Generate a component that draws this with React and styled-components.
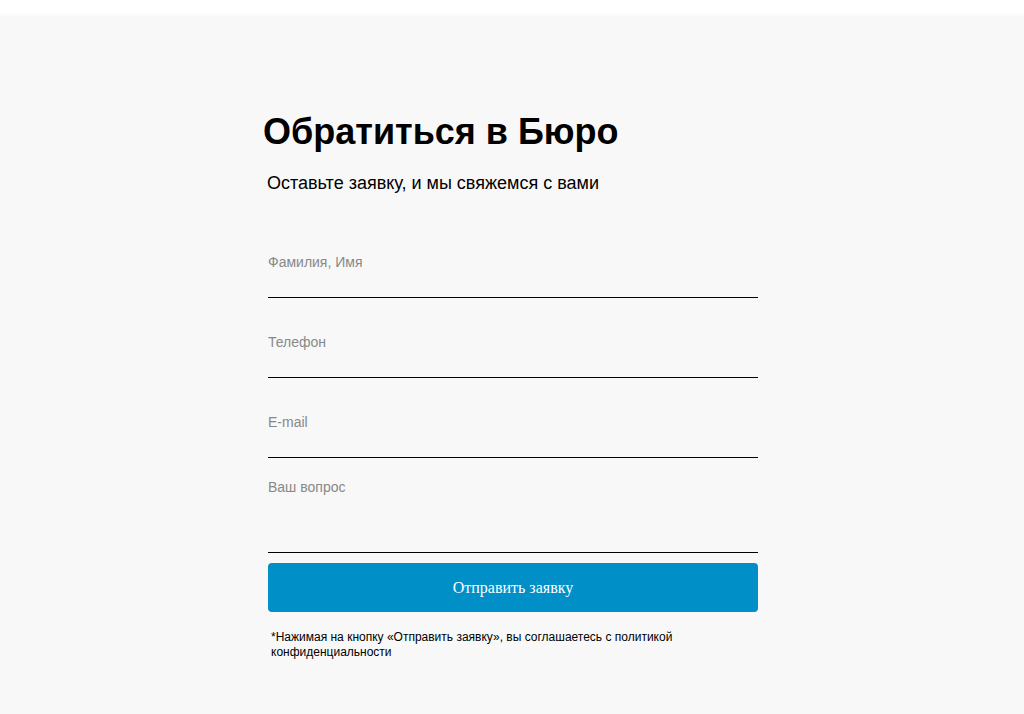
import React from 'react';
import styled, { createGlobalStyle } from 'styled-components';

const GlobalStyle = createGlobalStyle`
  html, body {
    margin: 0;
    padding: 0;
    background: #fff;
  }
  body {
    font-family: "Liberation Sans", Arial, sans-serif;
    color: #000;
  }
  * {
    box-sizing: border-box;
  }
`;

const Section = styled.section`
  min-height: 100vh;
  padding-top: 112px;
  background: linear-gradient(to bottom, #fff 0, #fff 12px, #f8f8f8 17px, #f8f8f8 100%);
`;

const Wrap = styled.div`
  width: 490px;
  margin: 0 auto;
  transform: translateX(1px);
`;

const Title = styled.h1`
  margin: 0 0 20px -5px;
  font-size: 36px;
  line-height: 40px;
  font-weight: 700;
`;

const Subtitle = styled.p`
  margin: 0 0 48px -1px;
  font-size: 18px;
  line-height: 22px;
`;

const Form = styled.form`
  display: flex;
  flex-direction: column;
`;

const Input = styled.input`
  display: block;
  width: 100%;
  margin: ${p => (p.$first ? '0' : '24px')} 0 0;
  padding: 10px 0 25px;
  height: 56px;
  border: 0;
  border-bottom: 1px solid #000;
  border-radius: 0;
  background: transparent;
  font-family: "Liberation Sans", Arial, sans-serif;
  font-size: 14px;
  line-height: 20px;
  color: #000;
  outline: none;

  &::placeholder {
    color: #888;
    opacity: 1;
  }
`;

const Textarea = styled.textarea`
  display: block;
  width: 100%;
  margin: 10px 0 0;
  padding: 9px 0 15px;
  height: 85px;
  border: 0;
  border-bottom: 1px solid #000;
  border-radius: 0;
  background: transparent;
  resize: none;
  font-family: "Liberation Sans", Arial, sans-serif;
  font-size: 14px;
  line-height: 20px;
  color: #000;
  outline: none;

  &::placeholder {
    color: #888;
    opacity: 1;
  }
`;

const Submit = styled.button`
  display: block;
  width: 100%;
  height: 49px;
  margin-top: 10px;
  border: 0;
  border-radius: 4px;
  background: #008fc7;
  color: #fff;
  font-family: "Liberation Serif", "Times New Roman", serif;
  font-size: 16px;
  cursor: pointer;
`;

const Note = styled.p`
  margin: 18px 0 0;
  padding-left: 3px;
  font-size: 12px;
  line-height: 15px;
  color: #000;
`;

export default function App() {
  return (
    <>
      <GlobalStyle />
      <Section>
        <Wrap>
          <Title>Обратиться в Бюро</Title>
          <Subtitle>Оставьте заявку, и мы свяжемся с вами</Subtitle>
          <Form onSubmit={e => e.preventDefault()}>
            <Input $first type="text" placeholder="Фамилия, Имя" />
            <Input type="tel" placeholder="Телефон" />
            <Input type="email" placeholder="E-mail" />
            <Textarea placeholder="Ваш вопрос" />
            <Submit type="submit">Отправить заявку</Submit>
          </Form>
          <Note>
            *Нажимая на кнопку «Отправить заявку», вы соглашаетесь с политикой
            <br />
            конфиденциальности
          </Note>
        </Wrap>
      </Section>
    </>
  );
}
